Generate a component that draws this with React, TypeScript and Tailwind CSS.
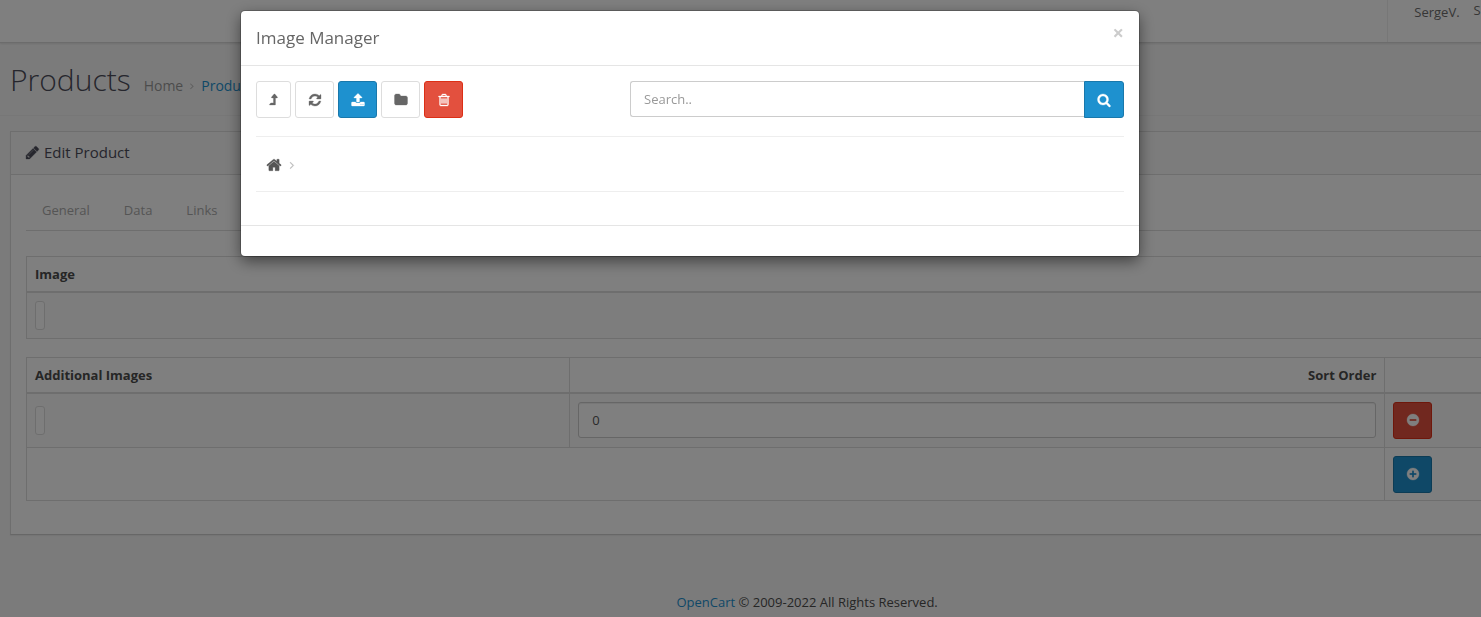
// Product form with the image manager dialog open on top of it

import { ReactNode } from "react";

const circle =
  "m320-64q0 209-103 385.500t-279.500 279.500-385.500 103-385.500-103-279.500-279.500-103-385.500 103-385.500 279.500-279.500 385.500-103 385.500 103 279.500 279.500 103 385.500z";

const paths = {
  levelUp:
    "M1331 595q-18 37-58 37h-192v864q0 14-9 23t-23 9h-704q-21 0-29-18-8-20 4-35l160-192q9-11 25-11h320v-640h-192q-40 0-58-37-17-37 9-68l320-384q18-22 49-22t49 22l320 384q27 32 9 68z",
  refresh:
    "M1639 1056q0 5-1 7-64 268-268 434.500t-478 166.500q-146 0-282.500-55t-243.500-157l-129 129q-19 19-45 19t-45-19-19-45v-448q0-26 19-45t45-19h448q26 0 45 19t19 45-19 45l-137 137q71 66 161 102t187 36q134 0 250-65t186-179q11-17 53-117 8-23 30-23h192q13 0 22.500 9.500t9.500 22.500zm25-800v448q0 26-19 45t-45 19h-448q-26 0-45-19t-19-45 19-45l138-138q-148-137-349-137-134 0-250 65t-186 179q-11 17-53 117-8 23-30 23h-199q-13 0-22.500-9.500t-9.500-22.500v-7q65-268 270-434.500t480-166.500q146 0 284 55.500t245 156.500l130-129q19-19 45-19t45 19 19 45z",
  upload:
    "M1344 1472q0-26-19-45t-45-19-45 19-19 45 19 45 45 19 45-19 19-45zm256 0q0-26-19-45t-45-19-45 19-19 45 19 45 45 19 45-19 19-45zm128-224v320q0 40-28 68t-68 28h-1472q-40 0-68-28t-28-68v-320q0-40 28-68t68-28h427q21 56 70.500 92t110.500 36h256q61 0 110.500-36t70.500-92h427q40 0 68 28t28 68zm-325-648q-17 40-59 40h-256v448q0 26-19 45t-45 19h-256q-26 0-45-19t-19-45v-448h-256q-42 0-59-40-17-39 14-69l448-448q18-19 45-19t45 19l448 448q31 30 14 69z",
  folder:
    "M1728 608v704q0 92-66 158t-158 66h-1216q-92 0-158-66t-66-158v-960q0-92 66-158t158-66h320q92 0 158 66t66 158v32h672q92 0 158 66t66 158z",
  trash:
    "M704 736v576q0 14-9 23t-23 9h-64q-14 0-23-9t-9-23v-576q0-14 9-23t23-9h64q14 0 23 9t9 23zm256 0v576q0 14-9 23t-23 9h-64q-14 0-23-9t-9-23v-576q0-14 9-23t23-9h64q14 0 23 9t9 23zm256 0v576q0 14-9 23t-23 9h-64q-14 0-23-9t-9-23v-576q0-14 9-23t23-9h64q14 0 23 9t9 23zm128 724v-948h-896v948q0 22 7 40.500t14.500 27 10.500 8.500h832q3 0 10.500-8.500t14.500-27 7-40.500zm-672-1076h448l-48-117q-7-9-17-11h-317q-10 2-17 11zm928 32v64q0 14-9 23t-23 9h-96v948q0 83-47 143.500t-113 60.500h-832q-66 0-113-58.500t-47-141.500v-952h-96q-14 0-23-9t-9-23v-64q0-14 9-23t23-9h309l70-167q15-37 54-63t79-26h320q40 0 79 26t54 63l70 167h309q14 0 23 9t9 23z",
  search:
    "M1216 832q0-185-131.500-316.500t-316.500-131.500-316.500 131.500-131.500 316.500 131.500 316.500 316.500 131.500 316.500-131.500 131.500-316.500zm512 832q0 52-38 90t-90 38q-54 0-90-38l-343-342q-179 124-399 124-143 0-273.500-55.500t-225-150-150-225-55.500-273.500 55.500-273.500 150-225 225-150 273.500-55.500 273.500 55.500 225 150 150 225 55.500 273.500q0 220-124 399l343 343q37 37 37 90z",
  home:
    "M1472 992v480q0 26-19 45t-45 19h-384v-384h-256v384h-384q-26 0-45-19t-19-45v-480q0-1 .5-3t.5-3l575-474 575 474q1 2 1 6zm223-69l-62 74q-8 9-21 11h-3q-13 0-21-7l-692-577-692 577q-12 8-24 7-13-2-21-11l-62-74q-8-10-7-23.500t11-21.500l719-599q32-26 76-26t76 26l244 204v-195q0-14 9-23t23-9h192q14 0 23 9t9 23v408l219 182q10 8 11 21.500t-7 23.500z",
  pencil:
    "M491 1536l91-91-235-235-91 91v107h128v128h107zm523-928q0-22-22-22-10 0-17 7l-542 542q-7 7-7 17 0 22 22 22 10 0 17-7l542-542q7-7 7-17zm-54-192l416 416-832 832h-416v-416zm683 96q0 53-37 90l-166 166-416-416 166-165q36-38 90-38 53 0 91 38l235 234q37 39 37 91z",
  minus:
    "M1344 960v-128q0-26-19-45t-45-19h-768q-26 0-45 19t-19 45v128q0 26 19 45t45 19h768q26 0 45-19t19-45z" + circle,
  plus:
    "M1344 960v-128q0-26-19-45t-45-19h-256v-256q0-26-19-45t-45-19h-128q-26 0-45 19t-19 45v256h-256q-26 0-45 19t-19 45v128q0 26 19 45t45 19h256v256q0 26 19 45t45 19h128q26 0 45-19t19-45v-256h256q26 0 45-19t19-45z" + circle,
  angle:
    "M1171 960q0 13-10 23l-466 466q-10 10-23 10t-23-10l-50-50q-10-10-10-23t10-23l393-393-393-393q-10-10-10-23t10-23l50-50q10-10 23-10t23 10l466 466q10 10 10 23z",
};

const Icon = ({ name, size = 14 }: { name: keyof typeof paths; size?: number }) => (
  <svg
    width={size}
    height={size}
    viewBox="0 0 1792 1792"
    fill="currentColor"
    stroke="currentColor"
    strokeWidth={40}
    aria-hidden="true"
    className="shrink-0 overflow-visible"
  >
    <path d={paths[name]} />
  </svg>
);

const tones = {
  plain: "border-[#ddd] bg-white text-[#666]",
  primary: "border-[#1978ab] bg-[#1e91cf] text-white",
  danger: "border-[#dc2f16] bg-[#e3503e] text-white",
};

type ButtonProps = { label: string; tone?: keyof typeof tones; width?: string; children: ReactNode };

const IconButton = ({ label, tone = "plain", width = "w-[39px]", children }: ButtonProps) => (
  <button
    type="button"
    aria-label={label}
    className={`flex h-[37px] items-center justify-center rounded-[3px] border ${width} ${tones[tone]}`}
  >
    {children}
  </button>
);

const Thumb = () => (
  <a href="#" aria-label="Choose image" className="block h-[29px] w-[10px] rounded-[3px] border border-[#ddd] bg-white" />
);

const tabs = ["General", "Data", "Links"];

const ProductForm = () => (
  <section className="mx-[10px] mt-[15px] border border-[#dcdcdc] border-b-[#cfcfcf] bg-white shadow-[0_1px_1px_rgba(0,0,0,0.05)]">
    <div className="flex h-[43px] items-center gap-1 border-b border-[#dcdcdc] bg-[#f8f8f8] px-[14px] pb-[2px] text-[#4c4d5a]">
      <Icon name="pencil" size={15} />
      <h2 className="text-[15px]">Edit Product</h2>
    </div>
    <div className="px-[15px] pb-[33px] pt-[15px]">
      <nav className="flex h-[41px] items-center gap-[2px] border-b border-[#ddd]">
        {tabs.map((tab) => (
          <a key={tab} href="#" className="px-4 text-[#aaa]">
            {tab}
          </a>
        ))}
      </nav>

      <table className="mt-[25px] w-full border-collapse border border-[#ddd]">
        <thead>
          <tr className="h-[35px] border-b-2 border-[#ddd]">
            <th className="px-2 text-left font-bold">Image</th>
          </tr>
        </thead>
        <tbody>
          <tr className="h-[47px] bg-[#fafafa]">
            <td className="px-2">
              <Thumb />
            </td>
          </tr>
        </tbody>
      </table>

      <table className="mt-[18px] w-full table-fixed border-collapse border border-[#ddd]">
        <thead>
          <tr className="h-[35px] border-b-2 border-[#ddd]">
            <th className="w-[34.8%] border-r border-[#ddd] px-2 text-left font-bold">Additional Images</th>
            <th className="w-[52.2%] border-r border-[#ddd] px-2 text-right font-bold">Sort Order</th>
            <th aria-label="Action" />
          </tr>
        </thead>
        <tbody>
          <tr className="h-[55px] border-b border-[#ddd] bg-[#fafafa]">
            <td className="border-r border-[#ddd] px-2">
              <Thumb />
            </td>
            <td className="border-r border-[#ddd] px-2">
              <input
                aria-label="Sort Order"
                defaultValue="0"
                className="block h-[36px] w-full rounded-[3px] border border-[#ccc] bg-white px-[13px] text-[#555] shadow-[inset_0_1px_1px_rgba(0,0,0,0.075)]"
              />
            </td>
            <td className="px-2">
              <IconButton label="Remove" tone="danger">
                <Icon name="minus" />
              </IconButton>
            </td>
          </tr>
          <tr className="h-[53px]">
            <td colSpan={2} className="border-r border-[#ddd]" />
            <td className="px-2">
              <IconButton label="Add Image" tone="primary">
                <Icon name="plus" />
              </IconButton>
            </td>
          </tr>
        </tbody>
      </table>
    </div>
  </section>
);

const ImageManager = () => (
  <div role="dialog" aria-label="Image Manager" className="w-[898px] rounded-[4px] bg-white text-[#666] shadow-[0_5px_15px_rgba(0,0,0,0.5),0_0_0_1px_rgba(0,0,0,0.2)]">
    <div className="flex h-[55px] items-start justify-between border-b border-[#e5e5e5] px-[15px] pt-[15px]">
      <h4 className="text-[17px] leading-6">Image Manager</h4>
      <button type="button" aria-label="Close" className="text-[20px] font-bold leading-[14px] text-[#ccc]">
        ×
      </button>
    </div>
    <div className="px-[15px] pt-[15px]">
      <div className="flex justify-between">
        <div className="flex gap-1">
          <IconButton label="Parent" width="w-[35px]">
            <Icon name="levelUp" />
          </IconButton>
          <IconButton label="Refresh">
            <Icon name="refresh" />
          </IconButton>
          <IconButton label="Upload" tone="primary">
            <Icon name="upload" />
          </IconButton>
          <IconButton label="New Folder">
            <Icon name="folder" />
          </IconButton>
          <IconButton label="Delete" tone="danger">
            <Icon name="trash" />
          </IconButton>
        </div>
        <div className="flex w-full max-w-[494px] items-start">
          <input
            aria-label="Search"
            placeholder="Search.."
            className="h-[36px] min-w-0 flex-1 rounded-l-[3px] border border-r-0 border-[#ccc] px-[13px] placeholder:text-[#999]"
          />
          <button
            type="button"
            aria-label="Search"
            className="flex h-[37px] w-[40px] items-center justify-center rounded-r-[3px] border border-[#1978ab] bg-[#1e91cf] text-white"
          >
            <Icon name="search" />
          </button>
        </div>
      </div>
      <div className="mt-[18px] flex h-[56px] items-center gap-1 border-y border-[#eee] px-[10px] pt-[2px]">
        <a href="#" aria-label="Home" className="text-[#555]">
          <Icon name="home" size={16} />
        </a>
        <span className="text-[#bbb]">
          <Icon name="angle" size={12} />
        </span>
      </div>
    </div>
    <div className="mt-[33px] h-[31px] border-t border-[#e5e5e5]" />
  </div>
);

const App = () => {
  return (
    <div className="relative min-h-screen overflow-hidden bg-[#f7f7f7] font-['Open_Sans',sans-serif] text-[13px] leading-5 text-[#4c4c4c]">
      {/* the page is wider than the window */}
      <div className="w-[109%]">
        <header className="flex h-[43px] justify-end border-b border-[#d8d8d8] bg-white shadow-[0_1px_2px_rgba(0,0,0,0.1)]">
          <div className="flex w-[227px] items-start gap-[14px] border-l border-[#eee] pl-[26px] text-[#6d6d6d]">
            <a href="#" className="pt-[2px]">SergeV.</a>
            <a href="#">S</a>
          </div>
        </header>

        <div className="flex h-[73px] items-center gap-[13px] border-b border-[#eee] pl-[10px] pt-[2px]">
          <h1 className="text-[30px] font-light leading-9 text-[#4c4d5a]">Products</h1>
          <nav className="flex items-center gap-1 pt-[11px] text-[14px]">
            <a href="#" className="text-[#999]">Home</a>
            <span className="text-[#bbb]">
              <Icon name="angle" size={10} />
            </span>
            <a href="#" className="text-[#1e91cf]">Products</a>
          </nav>
        </div>

        <ProductForm />

        <footer className="pt-[57px] text-center">
          <a href="#" className="text-[#1e91cf]">OpenCart</a> © 2009-2022 All Rights Reserved.
        </footer>
      </div>

      <div className="fixed inset-0 flex items-start justify-center bg-black/50 pr-[101px] pt-[11px]">
        <ImageManager />
      </div>
    </div>
  );
};

export default App;
